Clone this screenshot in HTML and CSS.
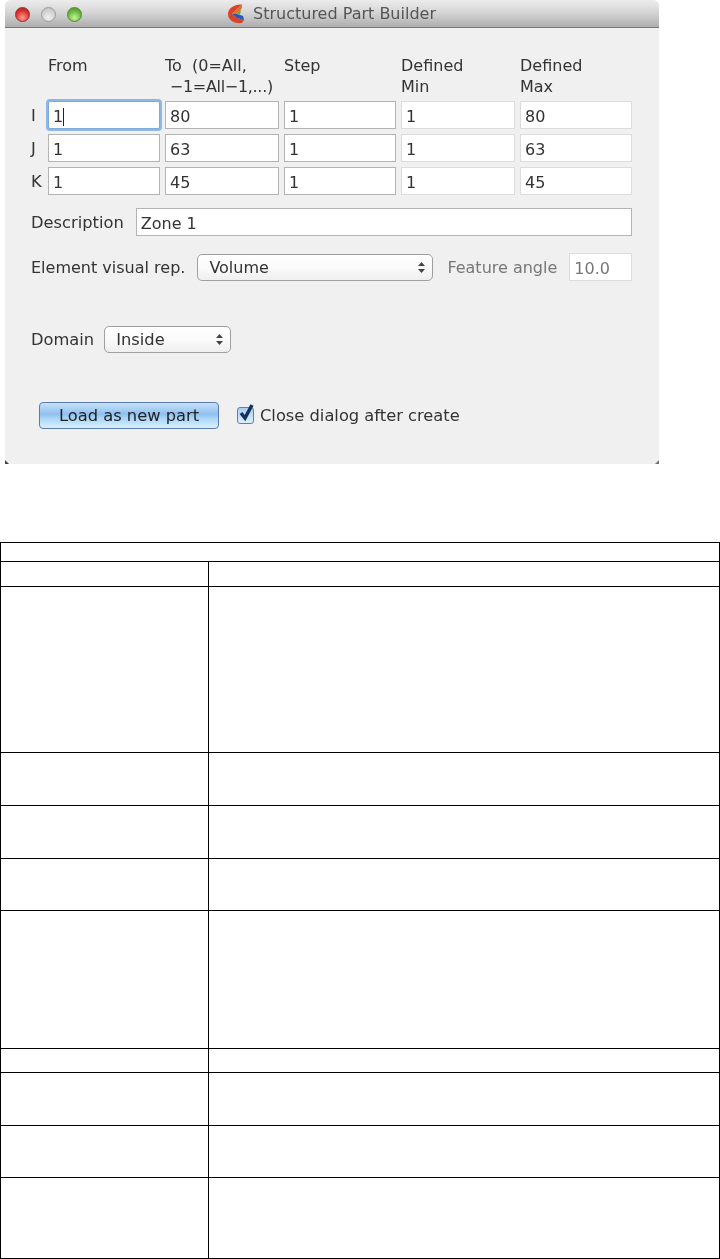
FILE: index.html
```html
<!DOCTYPE html>
<html lang="en">
<head>
  <meta charset="UTF-8" />
  <title>Structured Part Builder</title>
  <link rel="stylesheet" href="styles.css">
</head>
<body>

  <div class="window">
    <div class="titlebar">
      <div class="lights">
        <span class="light red"></span>
        <span class="light gray"></span>
        <span class="light green"></span>
      </div>
      <div class="title">
        <svg class="logo" width="16" height="20" viewBox="0 0 16 20">
          <path d="M14 0.500 C6 0 0 4.500 0 10 C0 16 6 20 14 19 L16 16 L9 14 L4 10 L9 5 Z" fill="#d8432a"/>
          <path d="M14 0.500 L9 5 L4 10 L8 10 L12 7 L14 4 Z" fill="#e0702c"/>
          <path d="M4 10 L9 14 L16 16 L15 12 L9 10 Z" fill="#2b55b8"/>
          <path d="M8 10 L13 6 L12 10.500 Z" fill="#58b04a"/>
        </svg>
        <span>Structured Part Builder</span>
      </div>
    </div>

    <div class="content">
      <div class="range-grid">
        <div></div>
        <div class="head">From</div>
        <div class="head">To&nbsp; (0=All,<br><span class="tight">&nbsp;−1=All−1,...)</span></div>
        <div class="head">Step</div>
        <div class="head">Defined<br>Min</div>
        <div class="head">Defined<br>Max</div>

        <label class="axis">I</label>
        <div class="caret-box"><input class="field focused" type="text" value="1"></div>
        <input class="field" type="text" value="80">
        <input class="field" type="text" value="1">
        <input class="field readonly" type="text" value="1">
        <input class="field readonly" type="text" value="80">

        <label class="axis">J</label>
        <input class="field" type="text" value="1">
        <input class="field" type="text" value="63">
        <input class="field" type="text" value="1">
        <input class="field readonly" type="text" value="1">
        <input class="field readonly" type="text" value="63">

        <label class="axis">K</label>
        <input class="field" type="text" value="1">
        <input class="field" type="text" value="45">
        <input class="field" type="text" value="1">
        <input class="field readonly" type="text" value="1">
        <input class="field readonly" type="text" value="45">
      </div>

      <div class="desc-row">
        <label>Description</label>
        <input class="field desc" type="text" value="Zone 1">
      </div>

      <div class="rep-row">
        <label class="rep-label">Element visual rep.</label>
        <div class="popup rep-popup">
          <span>Volume</span>
          <svg width="7" height="11" viewBox="0 0 7 11"><path d="M3.500 0 L7 4 L0 4 Z M0 7 L7 7 L3.500 11 Z" fill="#444"/></svg>
        </div>
        <label class="dim">Feature angle</label>
        <input class="field readonly angle" type="text" value="10.0">
      </div>

      <div class="domain-row">
        <label>Domain</label>
        <div class="popup domain-popup">
          <span>Inside</span>
          <svg width="7" height="11" viewBox="0 0 7 11"><path d="M3.500 0 L7 4 L0 4 Z M0 7 L7 7 L3.500 11 Z" fill="#444"/></svg>
        </div>
      </div>

      <div class="action-row">
        <button class="load-btn" type="button">Load as new part</button>
        <div class="check-label">
          <span class="check">
            <svg width="18" height="20" viewBox="0 0 18 20"><path d="M4 10 L8 15 L15 2" fill="none" stroke="#14305f" stroke-width="3.500"/></svg>
          </span>
          <span>Close dialog after create</span>
        </div>
      </div>
    </div>
    <span class="corner corner-left"></span>
    <span class="corner corner-right"></span>
  </div>

  <table class="spec-table">
    <colgroup>
      <col class="col-a">
      <col>
    </colgroup>
    <tr class="h19"><td colspan="2"></td></tr>
    <tr class="h25"><td></td><td></td></tr>
    <tr class="h166"><td></td><td></td></tr>
    <tr class="h53"><td></td><td></td></tr>
    <tr class="h53"><td></td><td></td></tr>
    <tr class="h52"><td></td><td></td></tr>
    <tr class="h138"><td></td><td></td></tr>
    <tr class="h24"><td></td><td></td></tr>
    <tr class="h53"><td></td><td></td></tr>
    <tr class="h52"><td></td><td></td></tr>
    <tr class="h81"><td></td><td></td></tr>
  </table>

</body>
</html>
```

FILE: styles.css
```css
html, body {
  margin: 0;
  padding: 0;
  background: #fff;
}

body {
  font-family: 'DejaVu Sans', Verdana, sans-serif;
  font-size: 16.3px;
  color: #333;
}

.window {
  position: relative;
  width: 654px;
  height: 464px;
  margin-left: 5px;
  background: #f0f0f0;
  border-radius: 6px 6px 0 0;
  overflow: hidden;
  filter: blur(0.4px);
}

.titlebar {
  position: relative;
  height: 27px;
  border-bottom: 1px solid #777;
  background: linear-gradient(#ececec, #d6d6d6 45%, #adadad);
  display: flex;
  align-items: center;
  justify-content: center;
}

.lights {
  position: absolute;
  left: 10px;
  top: 7px;
  display: flex;
  gap: 11px;
}

.light {
  width: 15px;
  height: 15px;
  border-radius: 50%;
  box-sizing: border-box;
}

.red {
  background: radial-gradient(circle at 50% 75%, #ff9a8f, #d8312c 60%, #a8201e);
  border: 1px solid #96302c;
}

.gray {
  background: radial-gradient(circle at 50% 75%, #f0f0f0, #bcbcbc);
  border: 1px solid #9a9a9a;
}

.green {
  background: radial-gradient(circle at 50% 75%, #c6f2a0, #66b53c 60%, #4a8f2a);
  border: 1px solid #4f8a30;
}

.title {
  display: flex;
  align-items: center;
  gap: 9px;
  font-size: 16px;
  color: #555;
}

.content {
  padding: 27px 26px 0;
}

label {
  white-space: nowrap;
}

.range-grid {
  display: grid;
  grid-template-columns: 12px 112px 114px 112px 114px 112px;
  grid-template-rows: 41px 28px 28px 28px;
  column-gap: 5px;
  row-gap: 5px;
}

.head {
  font-size: 16px;
  line-height: 21px;
  color: #333;
  white-space: nowrap;
}

.tight {
  letter-spacing: -0.3px;
}

.axis {
  align-self: center;
}

.field {
  box-sizing: border-box;
  height: 28px;
  width: 100%;
  margin: 0;
  padding: 3px 4px 0;
  border: 1px solid #b4b4b4;
  border-radius: 0;
  background: #fff;
  font-family: inherit;
  font-size: 16px;
  color: #333;
  outline: none;
}

.readonly {
  border-color: #dcdcdc;
}

.focused {
  border-color: #7fa9d8;
  box-shadow: 0 0 0 2px #8db8e6;
  border-radius: 2px;
}

.caret-box {
  position: relative;
}

.caret-box::after {
  content: "";
  position: absolute;
  left: 15px;
  top: 7px;
  width: 1px;
  height: 18px;
  background: #222;
}

.desc-row {
  display: flex;
  align-items: center;
  gap: 12px;
  margin-top: 13px;
}

.desc {
  width: 496px;
  flex-shrink: 0;
}

.rep-row {
  display: flex;
  align-items: center;
  gap: 11px;
  margin-top: 17px;
  font-size: 16px;
}

.rep-label {
  margin-right: 1px;
}

.popup {
  box-sizing: border-box;
  flex-shrink: 0;
  height: 27px;
  padding: 0 7px 0 11px;
  display: flex;
  align-items: center;
  justify-content: space-between;
  border: 1px solid #a0a0a0;
  border-radius: 5px;
  background: linear-gradient(#fff, #fafafa 50%, #efefef);
  color: #333;
}

.rep-popup {
  width: 236px;
  margin-top: 1px;
}

.dim {
  margin-left: 3px;
  color: #777;
}

.angle {
  width: 63px;
  flex-shrink: 0;
  margin-left: 1px;
  color: #777;
}

.domain-row {
  display: flex;
  align-items: center;
  gap: 10px;
  margin-top: 45px;
}

.domain-popup {
  width: 127px;
}

.action-row {
  display: flex;
  align-items: center;
  gap: 18px;
  margin-top: 49px;
  padding-left: 8px;
}

.load-btn {
  box-sizing: border-box;
  width: 180px;
  height: 27px;
  padding: 0;
  border: 1px solid #5a7bb0;
  border-radius: 4px;
  background: linear-gradient(#c6e0f8, #8fc0ef 45%, #a8d4f7 60%, #d9f0ff);
  font-family: inherit;
  font-size: 16.3px;
  color: #222;
}

.check-label {
  display: flex;
  align-items: center;
  gap: 6px;
  color: #333;
}

.check {
  position: relative;
  display: block;
  width: 15px;
  height: 15px;
  border: 1px solid #5f7fb4;
  border-radius: 3px;
  background: linear-gradient(#a9cdf2, #dcefff);
}

.check svg {
  position: absolute;
  left: -1px;
  top: -5px;
}

.corner {
  position: absolute;
  bottom: 0;
  width: 0;
  height: 0;
  border-style: solid;
}

.corner-left {
  left: 0;
  border-width: 4px 0 0 4px;
  border-color: transparent transparent transparent #444;
}

.corner-right {
  right: 0;
  border-width: 0 0 4px 4px;
  border-color: transparent transparent #777 transparent;
}

.spec-table {
  width: 720px;
  margin-top: 78px;
  border-collapse: collapse;
  table-layout: fixed;
}

.spec-table td {
  border: 1px solid #000;
  padding: 0;
}

.col-a {
  width: 208px;
}

.h19 { height: 19px; }
.h24 { height: 24px; }
.h25 { height: 25px; }
.h52 { height: 52px; }
.h53 { height: 53px; }
.h81 { height: 81px; }
.h138 { height: 138px; }
.h166 { height: 166px; }
```
